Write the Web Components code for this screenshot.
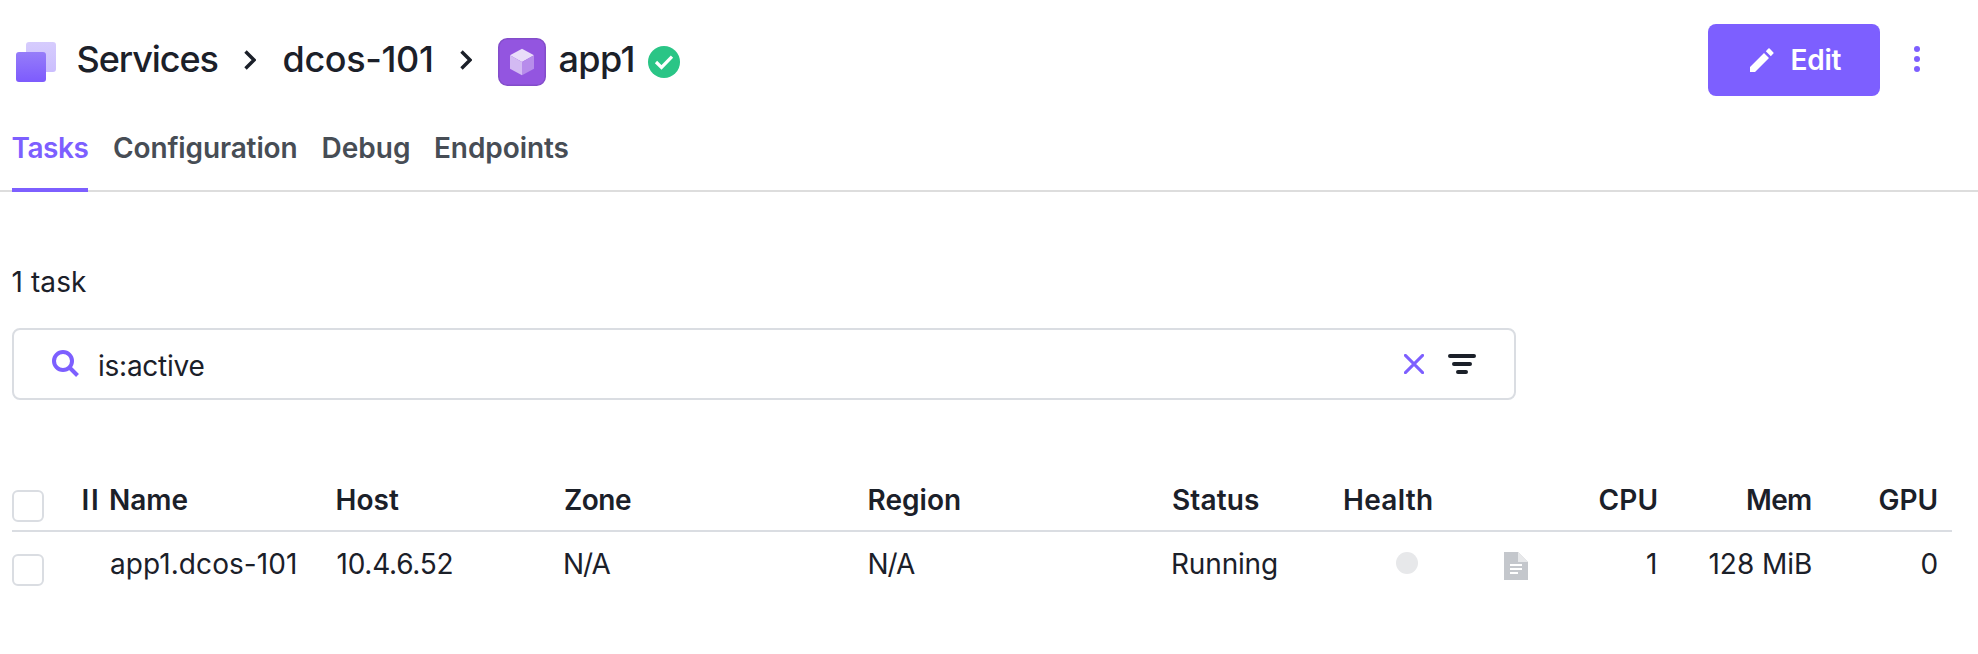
<!DOCTYPE html>
<html lang="en">
<head>
<meta charset="utf-8">
<title>app1</title>
<style>
body{margin:0;background:#fff;color:#1b2029;font:400 28px/36px Inter,"Liberation Sans",sans-serif}
</style>
</head>
<body>
<service-page></service-page>
<script>
const define=(name,html,setup)=>customElements.define(name,class extends HTMLElement{
  constructor(){super();this.attachShadow({mode:'open'}).innerHTML=html}
  connectedCallback(){if(setup)setup(this,this.shadowRoot)}
});

/* A label tracked so that its ink spans the width given in "w". */
const ctx=document.createElement('canvas').getContext('2d');
define('fit-label',`<style>:host{display:block;white-space:pre;flex:none}span{display:block}</style><span><slot></slot></span>`,(el,root)=>{
  const cs=getComputedStyle(el),text=el.textContent,w=+el.getAttribute('w');
  ctx.font=`${cs.fontWeight} ${cs.fontSize} Inter`;
  const m=ctx.measureText(text),ink=m.actualBoundingBoxRight+m.actualBoundingBoxLeft;
  const s=root.querySelector('span');
  el.style.width=w+'px';
  s.style.marginLeft=m.actualBoundingBoxLeft+.5+'px';
  if(text.length>1)s.style.letterSpacing=(w-ink)/(text.length-1)+'px';
});

const icons={
services:[40,40,`<defs><linearGradient id="a" x1="0" y1="0" x2="0" y2="1"><stop stop-color="#967df9"/><stop offset="1" stop-color="#7d5bfd"/></linearGradient><linearGradient id="b" x1="0" y1="0" x2="0" y2="1"><stop stop-color="#d6ccfd"/><stop offset="1" stop-color="#cbbefe"/></linearGradient></defs><rect x="10" width="30" height="30" rx="3" fill="url(#b)"/><rect y="10" width="30" height="30" rx="3" fill="url(#a)"/>`],
chevron:[12,20,`<path d="M1.5 1.5 10 10 1.5 18.5" fill="none" stroke="#1b2029" stroke-width="3.4"/>`],
app:[48,48,`<rect x=".75" y=".75" width="46.5" height="46.5" rx="8.5" fill="#9355e0" stroke="#834dca" stroke-width="1.5"/><path d="M24 10.7 36 17.3 24 24 12 17.3Z" fill="#e9dcf9"/><path d="M12 17.3 24 24V37.3L12 30.7Z" fill="#d3baf3"/><path d="M36 17.3 24 24V37.3L36 30.7Z" fill="#b78ceb"/>`],
check:[32,32,`<circle cx="16" cy="16" r="16" fill="#2ac586"/><path d="M8 16 13.5 21.4 24 10.6" fill="none" stroke="#fff" stroke-width="3.2"/>`],
pencil:[24,24,`<path d="M0 19 14 5 19 10 5 24H0ZM15.8 3.2 18.4.6Q19 0 19.6.6L23.4 4.4Q24 5 23.4 5.6L20.8 8.2Z" fill="#fff"/>`],
dots:[6,26,`<circle cx="3" cy="3" r="3"/><circle cx="3" cy="13" r="3"/><circle cx="3" cy="23" r="3"/>`],
search:[28,28,`<circle cx="11" cy="11" r="9" fill="none" stroke="#7d5fff" stroke-width="4"/><path d="M17 17 25.5 25.5" stroke="#7d5fff" stroke-width="4"/>`],
clear:[20,20,`<path d="M1.4 1.4 18.6 18.6M18.6 1.4 1.4 18.6" stroke="#7d5fff" stroke-width="3" stroke-linecap="round"/>`],
filter:[28,20,`<path d="M2 2H26M6 10H22M10 18H18" stroke="#1b2029" stroke-width="4" stroke-linecap="round"/>`],
log:[24,28,`<path d="M0 0H14L24 10V28H0Z" fill="#c4c7cc"/><path d="M14 0 24 10H14Z" fill="#e7e8ea"/><path d="M6 13H18M6 17H18M6 21H14" stroke="#fff" stroke-width="2"/>`]
};
define('ui-icon',`<style>:host{display:block;flex:none}svg{display:block}</style>`,(el,root)=>{
  const [w,h,body]=icons[el.getAttribute('name')];
  root.innerHTML+=`<svg width="${w}" height="${h}" viewBox="0 0 ${w} ${h}" fill="#7d5fff">${body}</svg>`;
});

define('bread-crumb',`<style>
:host{display:flex;align-items:flex-start;font-size:36px;font-weight:500;line-height:44px;padding:38px 0 0 16px}
fit-label{margin-top:-1px}
.s{margin:4px 21px 0 0}.c1{margin:12px 27px 0 27px}.c2{margin:12px 26px 0 28.5px}.a{margin-right:13px}.k{margin:8px 0 0 15px}
</style>
<ui-icon class="s" name="services"></ui-icon><fit-label w="140">Services</fit-label>
<ui-icon class="c1" name="chevron"></ui-icon><fit-label w="148.5">dcos-101</fit-label>
<ui-icon class="c2" name="chevron"></ui-icon><ui-icon class="a" name="app"></ui-icon><fit-label w="74">app1</fit-label>
<ui-icon class="k" name="check"></ui-icon>`);

define('edit-button',`<style>
:host{box-sizing:border-box;display:flex;width:172px;height:72px;border-radius:8px;background:#7d5fff;color:#fff;font-weight:600;padding:18px 0 0 42px}
ui-icon{margin:6px 18px 0 0}</style><ui-icon name="pencil"></ui-icon><fit-label w="49">Edit</fit-label>`);

define('page-header',`<style>
:host{display:flex;justify-content:space-between;height:120px}
.r{display:flex;padding:24px 58px 0 0}.m{margin:22px 0 0 34px}
</style><bread-crumb></bread-crumb><div class="r"><edit-button></edit-button><ui-icon class="m" name="dots"></ui-icon></div>`);

define('tab-item',`<style>
:host{box-sizing:border-box;display:block;height:72px;padding:10px 0 0;color:#474d55;font-weight:600}
:host([active]){color:#7d5fff;border-bottom:4px solid #7d5fff}</style><slot></slot>`);
define('tab-bar',`<style>
:host{box-sizing:border-box;display:flex;height:72px;padding-left:12px;background:linear-gradient(#ddd,#ddd) 0 100%/100% 2px no-repeat}
tab-item+tab-item{margin-left:25.5px}tab-item+tab-item.wide{margin-left:27px}
</style><tab-item active><fit-label w="76">Tasks</fit-label></tab-item><tab-item><fit-label w="182.5">Configuration</fit-label></tab-item><tab-item class="wide"><fit-label w="85.5">Debug</fit-label></tab-item><tab-item class="wide"><fit-label w="132.5">Endpoints</fit-label></tab-item>`);

define('filter-field',`<style>
:host{box-sizing:border-box;display:flex;width:1504px;height:72px;border:2px solid #dadde2;border-radius:8px;padding:0 38px}
.q{margin:20px 18.5px 0 0}.l{margin-top:18px;flex:none}.x{margin:24px 24px 0 auto}.f{margin-top:24px}
</style><ui-icon class="q" name="search"></ui-icon><fit-label class="l" w="104.5">is:active</fit-label>
<ui-icon class="x" name="clear"></ui-icon><ui-icon class="f" name="filter"></ui-icon>`);

define('check-box',`<style>:host{box-sizing:border-box;display:block;width:32px;height:32px;border:2px solid #dadde2;border-radius:6px;background:#fff}</style>`);
define('status-dot',`<style>:host{display:block;width:22px;height:22px;border-radius:50%;background:#e7e8ea}</style>`);

define('table-row',`<style>
:host{box-sizing:border-box;display:grid;grid-template-columns:71px 27.5px 226.5px 227.5px 304.5px 303.5px 172px 159px 24px 128.5px 154.5px 125.5px;justify-content:start;align-items:start;height:64px;padding-top:14px}
:host([head]){height:62px;padding-top:12px;border-bottom:2px solid #dadde2;font-weight:600}
</style><slot></slot>`);

define('task-table',`<style>
:host{display:block;width:1940px}
.r{justify-self:end}check-box{margin-top:8px}.dot{margin:6px 0 0 51px}.doc{margin-top:6px}
</style>
<table-row head><check-box></check-box><fit-label w="13.5">II</fit-label><fit-label w="76.5">Name</fit-label><fit-label w="61.5">Host</fit-label><fit-label w="66">Zone</fit-label><fit-label w="90.5">Region</fit-label><fit-label w="86">Status</fit-label><fit-label w="87">Health</fit-label><span></span><fit-label class="r" w="57">CPU</fit-label><fit-label class="r" w="63">Mem</fit-label><fit-label class="r" w="57">GPU</fit-label></table-row>
<table-row><check-box></check-box><span></span><fit-label w="184">app1.dcos-101</fit-label><fit-label w="115">10.4.6.52</fit-label><fit-label w="45.5">N/A</fit-label><fit-label w="45.5">N/A</fit-label><fit-label w="103">Running</fit-label><status-dot class="dot"></status-dot><ui-icon class="doc" name="log"></ui-icon><fit-label class="r" w="9.5">1</fit-label><fit-label class="r" w="101.5">128 MiB</fit-label><fit-label class="r" w="15">0</fit-label></table-row>`);

define('service-page',`<style>
:host{display:block;height:654px;overflow:hidden}
.c{padding:72px 0 0 12px}.n{height:64px}task-table{margin-top:70px}
</style><page-header></page-header><tab-bar></tab-bar>
<div class="c"><div class="n"><fit-label w="73.5">1 task</fit-label></div><filter-field></filter-field><task-table></task-table></div>`);
</script>
</body>
</html>
